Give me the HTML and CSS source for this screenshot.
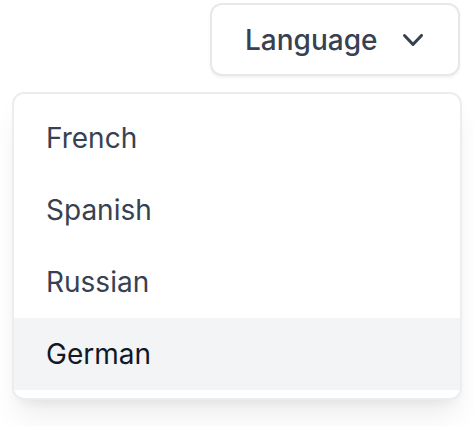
FILE: index.html
```html
<!DOCTYPE html>
<html lang="en">
<head>
<meta charset="utf-8">
<title>Language menu</title>
<link rel="stylesheet" href="styles.css">
</head>
<body>
<div class="wrap">
  <button class="trigger" type="button">
    <span>Language</span>
    <svg class="chev" viewBox="0 0 20 20" fill="currentColor" aria-hidden="true"><path fill-rule="evenodd" d="M5.23 7.21a.75.75 0 011.06.02L10 11.168l3.71-3.938a.75.75 0 111.08 1.04l-4.25 4.5a.75.75 0 01-1.08 0l-4.25-4.5a.75.75 0 01.02-1.06z" clip-rule="evenodd"/></svg>
  </button>
  <div class="menu">
    <a class="item">French</a>
    <a class="item">Spanish</a>
    <a class="item">Russian</a>
    <a class="item active">German</a>
  </div>
</div>
</body>
</html>
```
FILE: styles.css
```css
html, body {
  margin: 0;
  padding: 0;
  background: #ffffff;
}
body {
  font-family: Inter, "Noto Sans", sans-serif;
  width: 474px;
  height: 426px;
  overflow: hidden;
}
.wrap {
  display: flex;
  flex-direction: column;
  padding-top: 3px;
}
.trigger {
  align-self: flex-end;
  margin-right: 14px;
  display: inline-flex;
  align-items: center;
  gap: 16px;
  box-sizing: border-box;
  width: 250px;
  height: 73px;
  padding: 0 24px 0 33px;
  border: 2px solid #e7e8eb;
  border-radius: 12px;
  background: #fff;
  box-shadow: 0 2px 3px rgba(0,0,0,0.05);
  font-family: inherit;
  font-size: 28px;
  font-weight: 500;
  line-height: 40px;
  color: #374151;
}
.chev {
  width: 40px;
  height: 40px;
  color: #374151;
}
.menu {
  margin: 16px 12px 0 12px;
  box-sizing: border-box;
  width: 450px;
  padding: 8px 0;
  border: 2px solid #ecedef;
  border-radius: 12px;
  background: #fff;
  box-shadow: 0 20px 30px -6px rgba(0,0,0,0.08), 0 8px 12px -6px rgba(0,0,0,0.06);
  display: flex;
  flex-direction: column;
}
.item {
  display: block;
  padding: 16px 32px;
  font-size: 28px;
  line-height: 40px;
  color: #374151;
}
.item.active {
  background: #f3f4f6;
  color: #111827;
}
```
